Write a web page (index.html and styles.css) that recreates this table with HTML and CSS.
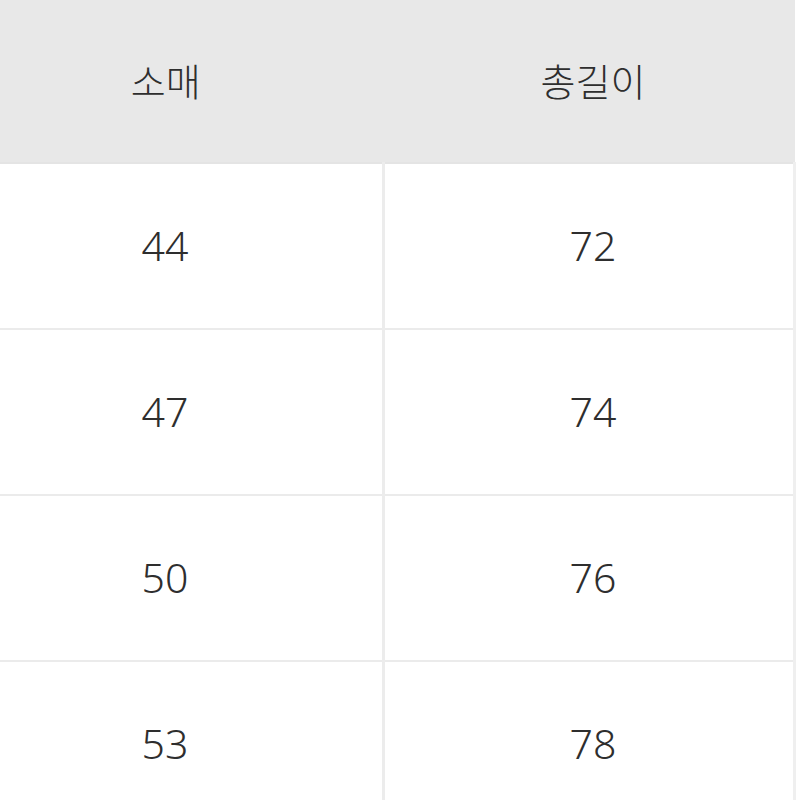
FILE: index.html
```html
<!DOCTYPE html>
<html lang="ko">
<head>
<meta charset="utf-8">
<link rel="stylesheet" href="styles.css">
</head>
<body>
<div class="page">
  <table class="size-table">
    <thead>
      <tr>
        <th class="col-a">소매</th>
        <th class="col-b">총길이</th>
      </tr>
    </thead>
    <tbody>
      <tr><td class="col-a">44</td><td class="col-b">72</td></tr>
      <tr><td class="col-a">47</td><td class="col-b">74</td></tr>
      <tr><td class="col-a">50</td><td class="col-b">76</td></tr>
      <tr><td class="col-a">53</td><td class="col-b">78</td></tr>
    </tbody>
  </table>
</div>
</body>
</html>
```

FILE: styles.css
```css
html, body {
  margin: 0;
  padding: 0;
  background: #ffffff;
}
.page {
  width: 800px;
  height: 800px;
  overflow: hidden;
}
.size-table {
  margin-left: -52px;
  border-collapse: collapse;
  table-layout: fixed;
  font-family: "Noto Sans", "Noto Sans CJK KR", sans-serif;
  color: #2e2e2e;
}
.size-table th {
  background: #e8e8e8;
  height: 160px;
  font-family: "Noto Sans CJK KR", sans-serif;
  font-weight: 300;
  font-size: 38px;
  line-height: 1;
  padding: 0 0 2px 0;
  border-bottom: 2px solid #e4e4e4;
}
.size-table td {
  height: 162px;
  font-size: 41px;
  font-weight: 300;
  line-height: 1;
  padding: 0 0 2px 0;
  border-top: 2px solid #ebebeb;
  border-bottom: 2px solid #ebebeb;
}
.size-table th, .size-table td {
  text-align: center;
  vertical-align: middle;
}
.col-a {
  width: 434px;
  border-right: 3px solid #ececec;
}
.col-b {
  width: 400px;
  padding-left: 8px !important;
  border-right: 3px solid #efefef;
}
.size-table th.col-a {
  border-right: none;
}
.size-table th.col-b {
  border-right: none;
}
```
